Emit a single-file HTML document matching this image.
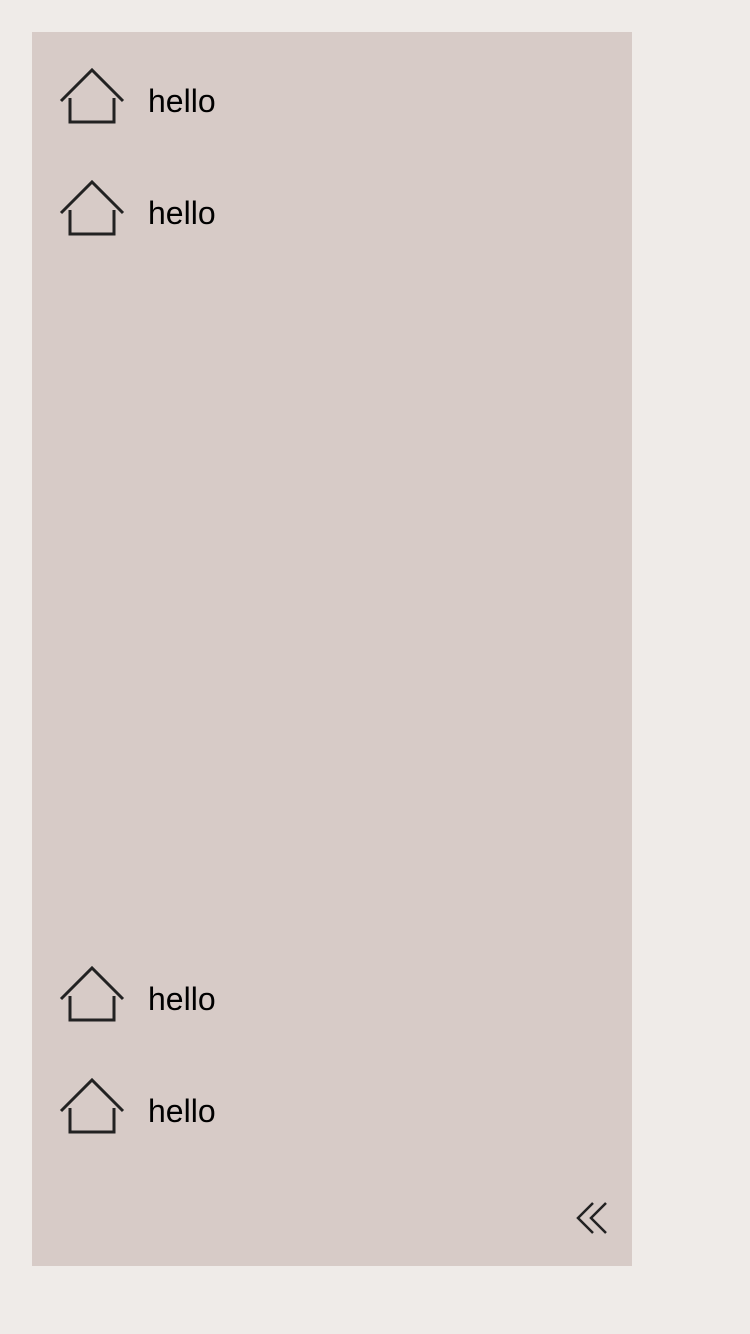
<!DOCTYPE html>
<html><head><style>
body{margin:0;background:#efebe8;width:750px;height:1334px;position:relative;font-family:"Liberation Sans",sans-serif;}
.panel{position:absolute;left:32px;top:32px;width:600px;height:1234px;background:#d7cbc7;}
.row{position:absolute;left:0;width:600px;height:60px;}
.row svg{position:absolute;left:26px;top:0;}
.row span{position:absolute;left:116px;top:13px;font-size:32px;line-height:40px;color:#000;}
</style></head><body>
<div class="panel">
<div class="row" style="top:36px"><svg width="68" height="60" viewBox="0 0 68 60"><path d="M3 33 L34 2 L65 33 M12 30 V54 H56 V30" fill="none" stroke="#222" stroke-width="3"/></svg><span>hello</span></div>
<div class="row" style="top:148px"><svg width="68" height="60" viewBox="0 0 68 60"><path d="M3 33 L34 2 L65 33 M12 30 V54 H56 V30" fill="none" stroke="#222" stroke-width="3"/></svg><span>hello</span></div>
<div class="row" style="top:934px"><svg width="68" height="60" viewBox="0 0 68 60"><path d="M3 33 L34 2 L65 33 M12 30 V54 H56 V30" fill="none" stroke="#222" stroke-width="3"/></svg><span>hello</span></div>
<div class="row" style="top:1046px"><svg width="68" height="60" viewBox="0 0 68 60"><path d="M3 33 L34 2 L65 33 M12 30 V54 H56 V30" fill="none" stroke="#222" stroke-width="3"/></svg><span>hello</span></div>
<svg style="position:absolute;left:540px;top:1165px" width="40" height="40" viewBox="0 0 40 40"><path d="M21 6 L6 21 L21 36 M34 6 L19 21 L34 36" fill="none" stroke="#222" stroke-width="2.5"/></svg>
</div>
</body></html>
